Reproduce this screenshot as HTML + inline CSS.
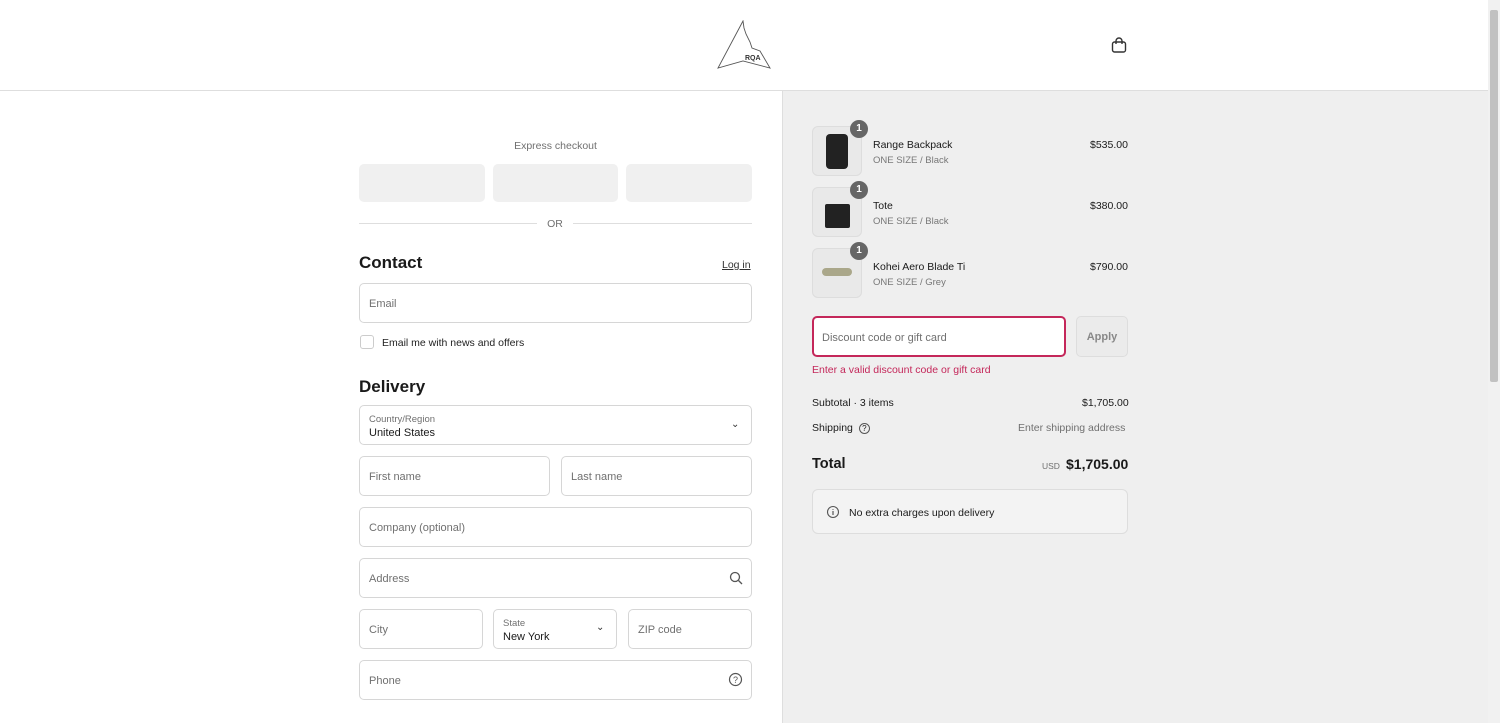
<!DOCTYPE html>
<html><head><style>
*{box-sizing:border-box;margin:0;padding:0}
body{width:1500px;height:723px;overflow:hidden;font-family:"Liberation Sans",sans-serif;color:#1a1a1a;background:#fff;position:relative}
.abs{position:absolute}
.inp{position:absolute;border:1px solid #d6d6d6;border-radius:5px;background:#fff;font-size:11px;color:#707070;padding-left:9px;padding-top:2px;display:flex;align-items:center}
.lbl{font-size:9.5px;color:#707070}
.sm{font-size:10.5px}
</style></head><body>
<div class="abs" style="left:0;top:0;width:1488px;height:91px;border-bottom:1px solid #dedede;background:#fff"></div>
<svg class="abs" style="left:716px;top:20px" width="56" height="50" viewBox="0 0 56 50"><path d="M27 1 L2 48 L27 41 L54 48 L44 31 L36 28 L34 22 L30 14 L28 8 Z" fill="none" stroke="#555" stroke-width="0.9"/><text x="29" y="40" font-size="7" font-family="Liberation Sans" fill="#333" font-weight="bold">RQA</text></svg>
<svg class="abs" style="left:1110px;top:36px" width="18" height="18" viewBox="0 0 18 18"><rect x="2.5" y="6" width="13" height="10" rx="2" fill="none" stroke="#333" stroke-width="1.4"/><path d="M6 8V5a3 3 0 0 1 6 0v3" fill="none" stroke="#333" stroke-width="1.4"/></svg>
<div class="abs" style="left:782px;top:91px;width:706px;height:632px;background:#efefef;border-left:1px solid #dedede"></div>
<div class="abs" style="left:1488px;top:0;width:12px;height:723px;background:#f1f1f1"></div>
<div class="abs" style="left:1490px;top:10px;width:8px;height:372px;background:#c1c1c1;border-radius:2px"></div>

<div class="abs sm" style="left:359px;top:140px;width:393px;text-align:center;color:#707070">Express checkout</div>
<div class="abs" style="left:359px;top:164px;width:126px;height:38px;background:#f0f0f0;border-radius:5px"></div>
<div class="abs" style="left:493px;top:164px;width:125px;height:38px;background:#f0f0f0;border-radius:5px"></div>
<div class="abs" style="left:626px;top:164px;width:126px;height:38px;background:#f0f0f0;border-radius:5px"></div>
<div class="abs" style="left:359px;top:223px;width:178px;height:1px;background:#dedede"></div>
<div class="abs" style="left:573px;top:223px;width:179px;height:1px;background:#dedede"></div>
<div class="abs sm" style="left:537px;top:218px;width:36px;text-align:center;color:#707070">OR</div>
<div class="abs" style="left:359px;top:253px;font-size:17px;font-weight:600">Contact</div>
<div class="abs sm" style="left:722px;top:259px;text-decoration:underline;color:#333">Log in</div>
<div class="inp" style="left:359px;top:283px;width:393px;height:40px">Email</div>
<div class="abs" style="left:360px;top:335px;width:14px;height:14px;border:1px solid #ccc;border-radius:3px"></div>
<div class="abs sm" style="left:382px;top:337px;color:#222">Email me with news and offers</div>
<div class="abs" style="left:359px;top:377px;font-size:17px;font-weight:600">Delivery</div>
<div class="inp" style="left:359px;top:405px;width:393px;height:40px;display:block;padding-top:8px"><div class="lbl">Country/Region</div><div style="font-size:11px;color:#1a1a1a;margin-top:2px">United States</div></div>
<div class="abs" style="left:731px;top:419px;font-size:10px;color:#333">&#8964;</div>
<div class="inp" style="left:359px;top:456px;width:191px;height:40px">First name</div>
<div class="inp" style="left:561px;top:456px;width:191px;height:40px">Last name</div>
<div class="inp" style="left:359px;top:507px;width:393px;height:40px">Company (optional)</div>
<div class="inp" style="left:359px;top:558px;width:393px;height:40px">Address</div>
<svg class="abs" style="left:729px;top:571px" width="14" height="14" viewBox="0 0 14 14"><circle cx="6" cy="6" r="4.5" fill="none" stroke="#555" stroke-width="1.3"/><path d="M9.5 9.5L13 13" stroke="#555" stroke-width="1.3"/></svg>
<div class="inp" style="left:359px;top:609px;width:124px;height:40px">City</div>
<div class="inp" style="left:493px;top:609px;width:124px;height:40px;display:block;padding-top:8px"><div class="lbl">State</div><div style="font-size:11px;color:#1a1a1a;margin-top:2px">New York</div></div>
<div class="abs" style="left:596px;top:622px;font-size:10px;color:#333">&#8964;</div>
<div class="inp" style="left:628px;top:609px;width:124px;height:40px">ZIP code</div>
<div class="inp" style="left:359px;top:660px;width:393px;height:40px">Phone</div>
<svg class="abs" style="left:728px;top:672px" width="15" height="15" viewBox="0 0 15 15"><circle cx="7.5" cy="7.5" r="6" fill="none" stroke="#555" stroke-width="1.2"/><text x="7.5" y="11" font-size="9" text-anchor="middle" fill="#555" font-family="Liberation Sans">?</text></svg>

<div class="abs" style="left:812px;top:126px;width:50px;height:50px;border:1px solid #ddd;border-radius:6px;background:#e9e9e9"></div>
<div class="abs" style="left:826px;top:134px;width:22px;height:35px;background:#222;border-radius:4px"></div>
<div class="abs" style="left:812px;top:187px;width:50px;height:50px;border:1px solid #ddd;border-radius:6px;background:#e9e9e9"></div>
<div class="abs" style="left:825px;top:204px;width:25px;height:24px;background:#222;border-radius:2px"></div>
<div class="abs" style="left:812px;top:248px;width:50px;height:50px;border:1px solid #ddd;border-radius:6px;background:#e9e9e9"></div>
<div class="abs" style="left:822px;top:268px;width:30px;height:8px;background:#aaa78a;border-radius:4px"></div>
<div class="abs" style="left:850px;top:120px;width:18px;height:18px;border-radius:9px;background:#666;color:#fff;font-size:10px;font-weight:bold;text-align:center;line-height:18px">1</div>
<div class="abs" style="left:850px;top:181px;width:18px;height:18px;border-radius:9px;background:#666;color:#fff;font-size:10px;font-weight:bold;text-align:center;line-height:18px">1</div>
<div class="abs" style="left:850px;top:242px;width:18px;height:18px;border-radius:9px;background:#666;color:#fff;font-size:10px;font-weight:bold;text-align:center;line-height:18px">1</div>
<div class="abs sm" style="left:873px;top:139px">Range Backpack</div><div class="abs" style="left:873px;top:155px;font-size:9.5px;color:#777">ONE SIZE / Black</div><div class="abs sm" style="left:1090px;top:139px">$535.00</div>
<div class="abs sm" style="left:873px;top:200px">Tote</div><div class="abs" style="left:873px;top:216px;font-size:9.5px;color:#777">ONE SIZE / Black</div><div class="abs sm" style="left:1090px;top:200px">$380.00</div>
<div class="abs sm" style="left:873px;top:261px">Kohei Aero Blade Ti</div><div class="abs" style="left:873px;top:277px;font-size:9.5px;color:#777">ONE SIZE / Grey</div><div class="abs sm" style="left:1090px;top:261px">$790.00</div>

<div class="inp" style="left:812px;top:316px;width:254px;height:41px;border:2px solid #c4275a;padding-left:8px">Discount code or gift card</div>
<div class="abs" style="left:1076px;top:316px;width:52px;height:41px;border:1px solid #ddd;border-radius:5px;background:#ebebeb;color:#888;font-size:11px;font-weight:bold;text-align:center;line-height:41px">Apply</div>
<div class="abs sm" style="left:812px;top:364px;color:#c4275a">Enter a valid discount code or gift card</div>
<div class="abs sm" style="left:812px;top:397px">Subtotal · 3 items</div><div class="abs sm" style="left:1082px;top:397px">$1,705.00</div>
<div class="abs sm" style="left:812px;top:422px">Shipping <span style="display:inline-block;width:11px;height:11px;border:1px solid #555;border-radius:6px;font-size:8px;text-align:center;line-height:10px;margin-left:3px">?</span></div>
<div class="abs sm" style="left:1018px;top:422px;color:#707070">Enter shipping address</div>
<div class="abs" style="left:812px;top:456px;font-size:14.5px;font-weight:bold">Total</div>
<div class="abs" style="left:1042px;top:461px;font-size:8.5px;color:#707070">USD</div>
<div class="abs" style="left:1066px;top:456px;font-size:14px;font-weight:bold">$1,705.00</div>
<div class="abs" style="left:812px;top:489px;width:316px;height:45px;border:1px solid #ddd;border-radius:6px;background:#f3f3f3"></div>
<svg class="abs" style="left:826px;top:505px" width="14" height="14" viewBox="0 0 14 14"><circle cx="7" cy="7" r="5.5" fill="none" stroke="#555" stroke-width="1.1"/><path d="M7 6v4M7 4v.8" stroke="#555" stroke-width="1.2"/></svg>
<div class="abs sm" style="left:849px;top:507px">No extra charges upon delivery</div>
</body></html>
